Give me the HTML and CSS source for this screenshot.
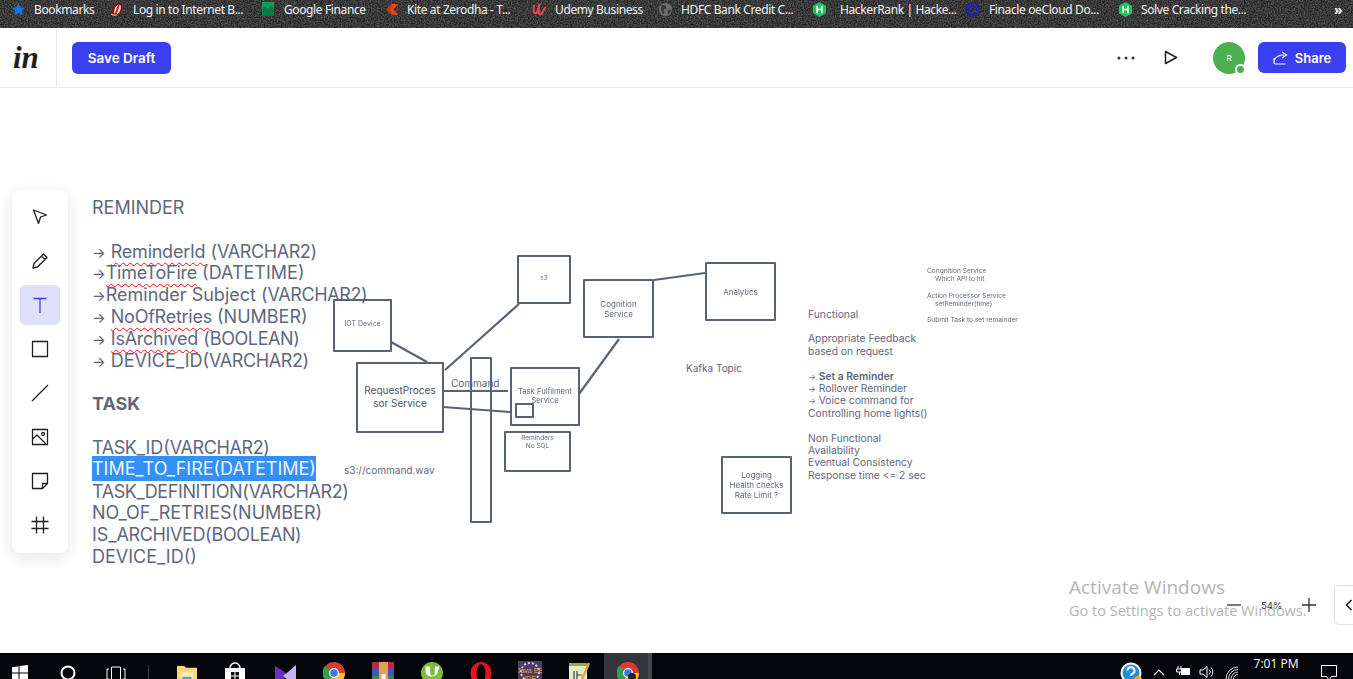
FILE: index.html
```html
<!DOCTYPE html>
<html lang="en">
<head>
<meta charset="utf-8">
<title>InVision Freehand</title>
<link rel="stylesheet" href="styles.css">
</head>
<body>
<div class="screen">
  <nav class="bookmarks">
    <svg class="grain" width="1353" height="28"><filter id="noise"><feTurbulence type="fractalNoise" baseFrequency="0.7" numOctaves="3" seed="4"/><feColorMatrix values="0 0 0 0 1  0 0 0 0 1  0 0 0 0 1  .45 0 0 0 -.1"/></filter><rect width="1353" height="28" filter="url(#noise)"/></svg>
    <a class="bm bm-a"><svg class="ic ic-star" viewBox="0 0 16 16"><path fill="#1a73e8" d="M8 0l2.400 5.300 5.600.6-4.200 3.800 1.200 5.700L8 12.500l-5 2.900 1.200-5.700L0 5.900l5.600-.6z"/></svg>Bookmarks</a>
    <a class="bm bm-b"><svg class="ic" viewBox="0 0 16 16"><ellipse cx="8" cy="8" rx="5.500" ry="7.500" transform="rotate(25 8 8)" fill="#7a1616"/><ellipse cx="8" cy="8" rx="3" ry="5.500" transform="rotate(25 8 8)" fill="#f5e9d8"/><path d="M9.500 3L6 13" stroke="#b51e1e" stroke-width="2"/><path d="M1.500 13c2 1.500 4 1.500 6 .5" stroke="#f29a1f" stroke-width="1.500" fill="none"/></svg>Log in to Internet B...</a>
    <a class="bm bm-c"><svg class="ic ic-sq" viewBox="0 0 12 14"><rect width="12" height="14" fill="#0f9d58"/><path d="M0 14V7l3-3 3 3 3-4 3 3v8z" fill="#0a7a43"/></svg>Google Finance</a>
    <a class="bm bm-d"><svg class="ic" viewBox="0 0 16 16"><path fill="#f0431c" d="M8 2h7L10 8l5 5.500H8L2 8z"/><path fill="#c9301a" d="M2 8l6-6v4L6 8l2 2v3.500z"/></svg>Kite at Zerodha - T...</a>
    <a class="bm bm-e"><svg class="ic" viewBox="0 0 16 16"><path fill="none" stroke="#e2474f" stroke-width="2.200" stroke-linecap="round" d="M2 4c0 3-1 8 1.500 8S7 7 8 2c-1 5-2 11 .5 11s3.500-4 5.500-7"/></svg>Udemy Business</a>
    <a class="bm bm-f"><svg class="ic" viewBox="0 0 16 16"><circle cx="8" cy="8" r="7" fill="#6e6e6e"/><path fill="#3a3a3a" d="M4 3l4 1 1 3-3 1 1 4-2 1-2-5zM10 9l3-1 1 2-3 3z"/></svg>HDFC Bank Credit C...</a>
    <a class="bm bm-g"><svg class="ic" viewBox="0 0 16 16"><path fill="#20c05c" d="M8 0l7 4v8l-7 4-7-4V4z"/><path stroke="#fff" stroke-width="1.800" d="M5.500 4v8M10.500 4v8M5.500 8h5"/></svg>HackerRank | Hacke...</a>
    <a class="bm bm-h"><svg class="ic" viewBox="0 0 16 16"><g fill="none" stroke="#1c24a8" stroke-width="1.600"><circle cx="8" cy="8" r="7"/><path d="M12 11a4.500 4.500 0 1 1 .5-3H6"/></g></svg>Finacle oeCloud Do...</a>
    <a class="bm bm-i"><svg class="ic" viewBox="0 0 16 16"><path fill="#20c05c" d="M8 0l7 4v8l-7 4-7-4V4z"/><path stroke="#fff" stroke-width="1.800" d="M5.500 4v8M10.500 4v8M5.500 8h5"/></svg>Solve Cracking the...</a>
    <span class="more">»</span>
  </nav>

  <header class="appbar">
    <div class="logo-cell"><span class="logo">in</span></div>
    <button class="btn save">Save Draft</button>
    <div class="spacer"></div>
    <svg class="dots" viewBox="0 0 18 4"><circle cx="2" cy="2" r="1.500"/><circle cx="9" cy="2" r="1.500"/><circle cx="16" cy="2" r="1.500"/></svg>
    <svg class="play" viewBox="0 0 14 15"><path d="M1.500 1.500v12l11-6z" fill="none" stroke="#1f1f1f" stroke-width="1.500" stroke-linejoin="round"/></svg>
    <div class="avatar">R<span class="status"></span></div>
    <button class="btn share"><svg class="share-ic" viewBox="0 0 16 14"><path d="M1 7v4.500a1.500 1.500 0 0 0 1.500 1.500h10M1.500 9C3 5.500 6 4 11 4M9 1l4.500 3L9 7" fill="none" stroke="#fff" stroke-width="1.200"/></svg>Share</button>
  </header>

  <main class="canvas">
    <svg class="wires" width="1353" height="565" viewBox="0 88 1353 565">
      <g stroke="#5a6278" stroke-width="2.200" fill="none">
        <path d="M391 342L427 362"/>
        <path d="M445 370L519 304"/>
        <path d="M654 280L705 273"/>
        <path d="M619 339L579 394"/>
        <path d="M443 391L508 391"/>
        <path d="M443 407L510 412"/>
      </g>
    </svg>

    <div class="doc">
      <p>REMINDER</p>
      <p>&nbsp;</p>
      <p><span class="arr">→</span> <span class="typo">ReminderId</span> (<span class="k">VARCHAR2</span>)</p>
      <p><span class="arr">→</span><span class="typo">TimeToFire</span> (DATETIME)</p>
      <p><span class="arr">→</span>Reminder Subject (<span class="k">VARCHAR2</span>)</p>
      <p><span class="arr">→</span> <span class="typo">NoOfRetries</span> (NUMBER)</p>
      <p><span class="arr">→</span> <span class="typo">IsArchived</span> (<span class="k">BOOLEAN</span>)</p>
      <p><span class="arr">→</span> DEVICE_ID(<span class="k">VARCHAR2</span>)</p>
      <p>&nbsp;</p>
      <p class="strong">TASK</p>
      <p>&nbsp;</p>
      <p><span class="k">TASK</span>_ID(<span class="k">VARCHAR2</span>)</p>
      <p><span class="sel">TIME_TO_FIRE(DATETIME)</span></p>
      <p><span class="k">TASK</span>_<span class="k">DEFINITION</span>(<span class="k">VARCHAR2</span>)</p>
      <p>NO_OF_RETRIES(NUMBER)</p>
      <p>IS_<span class="k">ARCHIVED</span>(<span class="k">BOOLEAN</span>)</p>
      <p>DEVICE_ID()</p>
    </div>

    <div class="node n-iot tiny">IOT Device</div>
    <div class="node n-s3 tiny">s3</div>
    <div class="node n-cog small">Cognition<br>Service</div>
    <div class="node n-req mid">RequestProces<br>sor Service</div>
    <div class="node n-bar"></div>
    <div class="node n-task small">Task Fulfilment<br>Service</div>
    <div class="node n-mini"></div>
    <div class="node n-rem tiny">Reminders<br>No SQL</div>
    <div class="node n-ana small">Analytics</div>
    <div class="node n-log small">Logging<br>Health checks<br>Rate Limit ?</div>

    <span class="label l-cmd">Command</span>
    <span class="label l-wav">s3://command.wav</span>
    <span class="label l-kafka">Kafka Topic</span>

    <div class="notes">
      <p>Functional</p>
      <p>&nbsp;</p>
      <p>Appropriate Feedback</p>
      <p>based on request</p>
      <p>&nbsp;</p>
      <p><span class="arr">→</span> <b>Set a Reminder</b></p>
      <p><span class="arr">→</span> Rollover Reminder</p>
      <p><span class="arr">→</span> Voice command for</p>
      <p>Controlling home lights()</p>
      <p>&nbsp;</p>
      <p>Non Functional</p>
      <p>Availability</p>
      <p>Eventual Consistency</p>
      <p>Response time &lt;= 2 sec</p>
    </div>

    <div class="micro">
      <p>Congnition Service</p>
      <p class="ind">Which API to hit</p>
      <p>&nbsp;</p>
      <p>Action Processor Service</p>
      <p class="ind">setReminder(time)</p>
      <p>&nbsp;</p>
      <p>Submit Task to set remainder</p>
    </div>

    <aside class="tools">
      <span class="tool"><svg viewBox="0 0 20 20"><path d="M3.500 3l13 5-6 2-2 6.500z"/></svg></span>
      <span class="tool"><svg viewBox="0 0 20 20"><path d="M3 17l1-4.500L13.500 3l3.500 3.500L7.500 16zM11.500 5l3.500 3.500"/></svg></span>
      <span class="tool active"><svg viewBox="0 0 20 20"><path d="M3.500 3.500h13M10 3.500V18"/></svg></span>
      <span class="tool"><svg viewBox="0 0 20 20"><rect x="2.500" y="2.500" width="15" height="15"/></svg></span>
      <span class="tool"><svg viewBox="0 0 20 20"><path d="M2 18L18 2"/></svg></span>
      <span class="tool"><svg viewBox="0 0 20 20"><rect x="2.500" y="2.500" width="15" height="15"/><path d="M2.500 12L7 8l9 9"/><circle cx="13" cy="7" r="1.500"/></svg></span>
      <span class="tool"><svg viewBox="0 0 20 20"><path d="M2.500 2.500h15v10l-5 5h-10zM17.500 12.500h-5v5"/></svg></span>
      <span class="tool"><svg viewBox="0 0 20 20"><path d="M6.500 1.500v17M13.500 1.500v17M1.500 6.500h17M1.500 13.500h17"/></svg></span>
    </aside>

    <div class="activate">
      <div class="act-1">Activate Windows</div>
      <div class="act-2">Go to Settings to activate Windows.</div>
    </div>

    <div class="zoom">
      <svg class="z-ic" viewBox="0 0 16 16"><path d="M1 8h14"/></svg>
      <span class="z-val">54%</span>
      <svg class="z-ic" viewBox="0 0 16 16"><path d="M1 8h14M8 1v14"/></svg>
    </div>
    <div class="panel"><svg viewBox="0 0 8 12"><path d="M6.500 1L1.500 6l5 5" fill="none" stroke="#222" stroke-width="1.600"/></svg></div>
  </main>

  <footer class="taskbar">
    <svg class="tb tb-win" viewBox="0 0 16 16"><path fill="#fff" d="M0 2.200l6.500-.9v6.200H0zM7.500 1.100L16 0v7.500H7.500zM0 8.500h6.500v6.200L0 13.800zM7.500 8.500H16V16l-8.500-1.100z"/></svg>
    <svg class="tb tb-cor" viewBox="0 0 16 16"><circle cx="8" cy="8" r="6.500" fill="none" stroke="#fff" stroke-width="2"/></svg>
    <svg class="tb tb-view" viewBox="0 0 20 16"><path d="M5.500 1h9v14h-9zM3 3H1v10h2M17 3h2v10h-2" fill="none" stroke="#fff" stroke-width="1"/></svg>
    <span class="sep"></span>
    <svg class="tb tb-app tb-folder" viewBox="0 0 22 22"><path fill="#f6d77a" d="M0 1h8l2 2h12v19H0z"/><rect x="4" y="8" width="14" height="14" fill="#fbe9ae"/><rect x="6" y="13" width="10" height="9" fill="#39a9dc"/></svg>
    <svg class="tb tb-app" viewBox="0 0 22 22"><path fill="#fff" d="M1 6h20v16H1z"/><path d="M6 6a5 5 0 0 1 10 0" fill="none" stroke="#fff" stroke-width="1.500"/><path fill="#111" d="M7 10h3.500v3.500H7zM11.500 10H15v3.500h-3.500zM7 14.500h3.500V18H7zM11.500 14.500H15V18h-3.500z"/></svg>
    <svg class="tb tb-app tb-vs" viewBox="0 0 22 22"><path fill="#6a2fc4" d="M0 1l8 5 5 4-5 4-8 7z"/><path fill="#c6b4ef" d="M21 0v22l-8-7-5-4 5-4z"/></svg>
    <svg class="tb tb-app" viewBox="0 0 22 22"><circle cx="11" cy="11" r="11" fill="#d93b30"/><path fill="#f7c325" d="M11 11L22 11A11 11 0 0 1 6 21z"/><path fill="#2fa14a" d="M11 11L6 21A11 11 0 0 1 2 4z"/><circle cx="11" cy="11" r="5" fill="#fff"/><circle cx="11" cy="11" r="3.800" fill="#3b78e7"/></svg>
    <svg class="tb tb-app" viewBox="0 0 22 22"><rect width="22" height="7" fill="#a92d55"/><rect y="7" width="22" height="7" fill="#3c5ab5"/><rect y="14" width="22" height="8" fill="#3c8a3f"/><rect x="7" y="0" width="9" height="22" fill="#e0a24a"/><rect x="9.500" y="12" width="4" height="6" fill="#fff"/></svg>
    <svg class="tb tb-app" viewBox="0 0 24 24"><circle cx="12" cy="12" r="12" fill="#7dbb3f"/><path d="M5 5v7a7 6 0 0 0 13 0l2-7h-5v7a2.500 3 0 0 1-5 0V5z" fill="#fff"/></svg>
    <svg class="tb tb-app tb-opera" viewBox="0 0 22 22"><ellipse cx="11" cy="11.500" rx="10.500" ry="11.500" fill="#e3141f"/><ellipse cx="11" cy="11.500" rx="4.500" ry="9.500" fill="#000"/></svg>
    <svg class="tb tb-app tb-java" viewBox="0 0 24 24"><rect width="24" height="24" rx="1" fill="#4a3d6b"/><circle cx="12" cy="11" r="9" fill="none" stroke="#d8cfe6" stroke-width="2" stroke-dasharray="2 2"/><text x="12" y="12" class="java-t">Java EE</text><text x="12" y="20" class="java-t">IDE</text></svg>
    <svg class="tb tb-app" viewBox="0 0 22 22"><rect x="1" y="1" width="18" height="21" fill="#e5edc8"/><path d="M1 2.500h18" stroke="#8db33d" stroke-width="3"/><path d="M6 17V9M9 17V9M9 13h5" stroke="#444" stroke-width="1.200"/><path d="M21 1L13 20" stroke="#e8a83a" stroke-width="2.500"/></svg>
    <span class="tb-active"><svg class="tb" viewBox="0 0 22 22"><circle cx="11" cy="11" r="11" fill="#d93b30"/><path fill="#f7c325" d="M11 11L22 11A11 11 0 0 1 6 21z"/><path fill="#2fa14a" d="M11 11L6 21A11 11 0 0 1 2 4z"/><circle cx="11" cy="11" r="5" fill="#fff"/><circle cx="11" cy="11" r="3.800" fill="#3b78e7"/><circle cx="15" cy="15" r="4" fill="#222"/></svg></span>
    <div class="spacer"></div>
    <svg class="tr tr-help" viewBox="0 0 22 22"><circle cx="11" cy="11" r="10.500" fill="#fff"/><circle cx="11" cy="11" r="8.500" fill="#1c8fd6"/><path d="M7.500 8.500A3.500 3.500 0 1 1 12 12c-.8.400-1 1-1 2" fill="none" stroke="#fff" stroke-width="2"/><circle cx="18" cy="18" r="4" fill="#f5a623"/></svg>
    <svg class="tr tr-chev" viewBox="0 0 12 8"><path d="M1 7l5-5 5 5" fill="none" stroke="#fff" stroke-width="1.200"/></svg>
    <svg class="tr tr-bat" viewBox="0 0 16 12"><path d="M3 1v3M6 1v3M1.500 4h6v3h-6zM4.500 7v3" stroke="#fff" fill="none"/><rect x="6" y="3" width="9" height="7" fill="#fff"/></svg>
    <svg class="tr tr-vol" viewBox="0 0 16 14"><path d="M1 5h3l4-3.500v11L4 9H1zM10 4.500a3.500 3.500 0 0 1 0 5M12 2.500a6.500 6.500 0 0 1 0 9" fill="none" stroke="#fff"/></svg>
    <svg class="tr tr-wifi" viewBox="0 0 14 14"><path d="M1 13A12 12 0 0 1 13 1M3.500 13A9.500 9.500 0 0 1 13 3.500M6 13a7 7 0 0 1 7-7M8.500 13A4.500 4.500 0 0 1 13 8.500" fill="none" stroke="#ddd"/></svg>
    <div class="clock"><span>7:01 PM</span><span>5/10/2022</span></div>
    <svg class="tr tr-note" viewBox="0 0 16 16"><path d="M.5.500h15v11h-5L8 15l-2.500-3.500h-5z" fill="none" stroke="#fff"/></svg>
  </footer>
</div>
</body>
</html>
```

FILE: styles.css
```css
* { box-sizing: border-box; }
html, body { margin: 0; height: 100%; overflow: hidden; }
body { font-family: Inter, "Liberation Sans", sans-serif; background: #fff; }
p { margin: 0; }
.screen { width: 1353px; height: 679px; display: flex; flex-direction: column; overflow: hidden; }
.spacer { flex: 1; }

/* bookmarks bar */
.bookmarks { position: relative; height: 28px; flex: none; background: #1d1d1d; display: flex; align-items: center; padding-bottom: 10px; color: #f4f4f4; font: 12px "Noto Sans", sans-serif; overflow: hidden; }
.grain { position: absolute; left: 0; top: 0; }
.bm { position: relative; display: flex; align-items: center; gap: 8px; white-space: nowrap; letter-spacing: -.38px; }
.ic { width: 15px; height: 15px; flex: none; }
.ic-star { width: 13px; height: 13px; margin-right: 1px; }
.ic-sq { width: 12px; height: 14px; margin-right: 2px; }
.bm-a { margin-left: 12px; width: 98px; }
.bm-b { width: 152px; }
.bm-c { width: 122px; }
.bm-d { width: 148px; }
.bm-e { width: 126px; }
.bm-f { width: 154px; }
.bm-g { width: 153px; gap: 13px; }
.bm-h { width: 153px; gap: 9px; }
.bm-i { width: 216px; gap: 8px; }
.more { position: relative; font-size: 14px; font-weight: 700; }

/* app bar */
.appbar { height: 60px; flex: none; display: flex; align-items: center; border-bottom: 1px solid #e9e9e9; background: #fff; }
.logo-cell { width: 57px; height: 59px; border-right: 1px solid #e9e9e9; display: flex; align-items: center; padding-left: 13px; }
.logo { font: italic 700 31px/1 "Liberation Serif", serif; color: #1f1f1f; }
.btn { border: 0; background: #3a3ff0; color: #fff; font: 600 13.500px Inter, sans-serif; border-radius: 6px; display: flex; align-items: center; justify-content: center; }
.save { width: 99px; height: 32px; margin-left: 15px; margin-top: 1px; }
.dots { width: 18px; height: 4px; fill: #333; margin-right: 29px; }
.play { width: 14px; height: 15px; margin-right: 35px; }
.avatar { position: relative; width: 32px; height: 32px; border-radius: 50%; background: #4caf50; color: #fff; font-size: 8px; font-weight: 500; display: flex; align-items: center; justify-content: center; margin-right: 13px; margin-top: 1px; }
.status { position: absolute; right: -1px; bottom: -1px; width: 11px; height: 11px; border-radius: 50%; background: #4caf50; border: 2px solid #fff; }
.share { width: 88px; height: 31px; gap: 6px; margin-right: 7px; font-size: 13px; }
.share-ic { width: 16px; height: 14px; }

/* canvas */
.canvas { position: relative; flex: 1; overflow: hidden; background: #fff; color: #5f677d; }
.wires { position: absolute; left: 0; top: 0; }
.doc { position: absolute; left: 92px; top: 109px; font-size: 18px; line-height: 21.800px; white-space: nowrap; }
.strong { font-weight: 700; }
.arr { font-size: .8em; line-height: 0; }
.k { letter-spacing: -.4px; }
.typo { letter-spacing: -.25px; text-decoration: underline wavy #ff0d0d 1.400px; text-underline-offset: 4px; }
.sel { display: inline-block; background: #3390f5; color: #eef3ff; height: 25px; margin-top: -3px; line-height: 25px; vertical-align: top; }

.node { position: absolute; border: 2.500px solid #5a6278; border-radius: 1px; display: flex; align-items: center; justify-content: center; text-align: center; background: transparent; }
.tiny { font-size: 6.500px; line-height: 7.500px; filter: blur(.3px); }
.small { font-size: 8px; line-height: 10px; filter: blur(.2px); }
.mid { font-size: 10px; line-height: 12.500px; color: #4c5366; }
.n-iot { left: 333px; top: 211px; width: 59px; height: 53px; padding-bottom: 4px; font-size: 7px; }
.n-s3 { left: 517px; top: 167px; width: 54px; height: 49px; padding-bottom: 2px; }
.n-cog { left: 583px; top: 191px; width: 71px; height: 59px; }
.n-req { left: 356px; top: 274px; width: 88px; height: 71px; padding-bottom: 2px; }
.n-bar { left: 470px; top: 269px; width: 22px; height: 166px; }
.n-task { left: 510px; top: 279px; width: 70px; height: 59px; padding-bottom: 1px; font-size: 7.600px; line-height: 9.500px; }
.n-mini { left: 515px; top: 315px; width: 19px; height: 15px; }
.n-rem { left: 504px; top: 343px; width: 67px; height: 41px; align-items: flex-start; padding-top: 2px; }
.n-ana { left: 705px; top: 174px; width: 71px; height: 59px; }
.n-log { left: 721px; top: 368px; width: 71px; height: 58px; }

.label { position: absolute; white-space: nowrap; font-size: 10px; line-height: 12px; }
.l-cmd { left: 451px; top: 289px; }
.l-wav { left: 344px; top: 376px; }
.l-kafka { left: 686px; top: 274px; }

.notes { position: absolute; left: 808px; top: 219.500px; font-size: 10.300px; line-height: 12.400px; white-space: nowrap; }
.notes b { font-weight: 600; }
.micro { position: absolute; left: 927px; top: 179px; font-size: 6.600px; line-height: 8.200px; white-space: nowrap; filter: blur(.3px); }
.ind { padding-left: 8px; }

/* tools */
.tools { position: absolute; left: 12px; top: 102px; width: 56px; height: 363px; padding: 7px 8px; display: flex; flex-direction: column; gap: 4px; background: #fff; border-radius: 8px; box-shadow: 0 4px 16px rgba(30, 30, 50, .12); }
.tool { width: 40px; height: 40px; flex: none; display: flex; align-items: center; justify-content: center; border-radius: 5px; }
.tool svg { width: 20px; height: 20px; fill: none; stroke: #1f1f1f; stroke-width: 1.300; stroke-linejoin: round; }
.tool.active { background: #dfe1fc; }
.tool.active svg { stroke: #3a3ff0; }

.activate { position: absolute; left: 1069px; top: 488px; color: #b4b4b4; font-family: "Open Sans", sans-serif; white-space: nowrap; }
.act-1 { font-size: 19px; line-height: 23px; }
.act-2 { font-size: 14.500px; line-height: 23px; }

.zoom { position: absolute; left: 1226px; top: 509px; display: flex; align-items: center; gap: 19px; color: #333; font-size: 9.500px; }
.z-ic { width: 16px; height: 16px; fill: none; stroke: #333; stroke-width: 1.300; }
.panel { position: absolute; left: 1334px; top: 497px; width: 30px; height: 40px; border: 1px solid #e2e2e2; border-radius: 5px; background: #fff; padding: 13px 0 0 10px; }
.panel svg { display: block; width: 8px; height: 12px; }

/* taskbar */
.taskbar { height: 26px; flex: none; background: #05050c; display: flex; align-items: flex-start; color: #fff; overflow: hidden; }
.tb { flex: none; }
.tb-win { width: 16px; height: 16px; margin: 12px 0 0 12px; }
.tb-cor { width: 16px; height: 16px; margin: 12px 0 0 32px; }
.tb-view { width: 20px; height: 16px; margin: 13px 0 0 30px; }
.sep { width: 1px; height: 14px; background: #3a3a3a; margin: 12px 0 0 22px; }
.tb-app { width: 22px; height: 22px; margin: 9px 0 0 26.700px; }
.tb-folder { margin: 11px 0 0 28px; width: 20px; }
.tb-vs { margin-top: 12px; margin-left: 29px; }
.tb-opera { margin-left: 27.500px; }
.tb-java { width: 24px; height: 24px; margin-left: 25.500px; margin-top: 8px; }
.java-t { font: 7px "Liberation Sans", sans-serif; fill: #f0a64a; text-anchor: middle; }
.tb-active { flex: none; width: 48px; height: 26px; margin-left: 14px; padding: 9px 0 0 13px; background: #34363b; border-right: 4px solid #45474c; }
.tb-active .tb { display: block; width: 22px; height: 22px; }
.tr { flex: none; }
.tr-help { width: 22px; height: 22px; margin: 9px 0 0 0; }
.tr-chev { width: 12px; height: 8px; margin: 15px 0 0 11px; }
.tr-bat { width: 16px; height: 12px; margin: 12px 0 0 10px; }
.tr-vol { width: 16px; height: 14px; margin: 12px 0 0 8px; }
.tr-wifi { width: 14px; height: 14px; margin: 13px 0 0 10px; }
.clock { display: flex; flex-direction: column; align-items: center; gap: 5px; width: 60px; margin: 3px 0 0 7px; font: 12px/15px "Open Sans", sans-serif; color: #fff; }
.tr-note { width: 16px; height: 16px; margin: 12px 16px 0 15px; }
```
